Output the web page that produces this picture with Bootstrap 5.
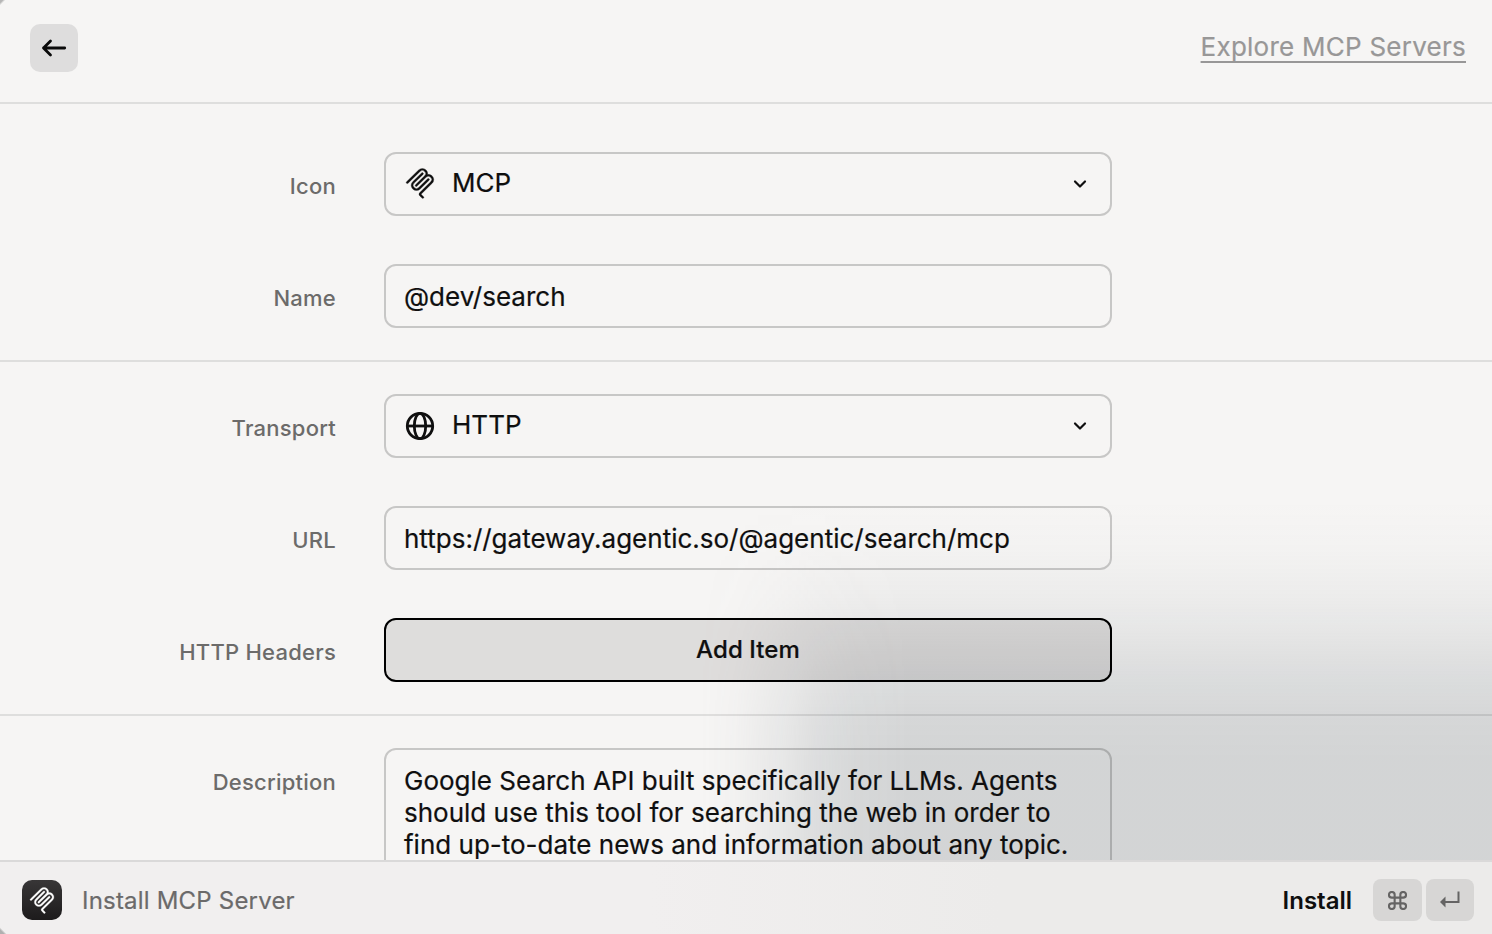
<!DOCTYPE html>
<html lang="en">
<head>
<meta charset="utf-8">
<meta name="viewport" content="width=device-width, initial-scale=1">
<title>Install MCP Server</title>
<link href="https://cdn.jsdelivr.net/npm/bootstrap@5.3.0/dist/css/bootstrap.min.css" rel="stylesheet">
<style>
  body { font-family: Inter, sans-serif; font-size: 26px; line-height: 32px; color: #0f0f0f; background: #f6f5f4; letter-spacing: 0; -webkit-text-stroke: .2px; }
  .window { height: 934px; }
  .topbar { height: 104px; padding: 24px 26px 0 30px; border-bottom: 2px solid #dededd; background: linear-gradient(135deg, #b5b5b5 2px, transparent 4px); }
  .back, .back:hover { width: 48px; height: 48px; border-radius: 10px; background: #dedddd; }
  .explore { color: #989797; text-underline-offset: 5px; text-decoration-thickness: 2px; letter-spacing: .25px; margin-top: 7px; }
  .explore:hover { color: #777; }
  /* dark window showing softly through the translucent panel */
  .backdrop-shade { inset: 0; pointer-events: none;
    background: linear-gradient(to bottom, rgba(105,115,122,0) 500px, rgba(105,115,122,.02) 550px, rgba(105,115,122,.065) 600px, rgba(105,115,122,.125) 640px, rgba(105,115,122,.19) 680px, rgba(105,115,122,.23) 720px, rgba(105,115,122,.248) 760px);
    -webkit-mask-image: linear-gradient(to right, transparent 700px, rgba(0,0,0,.1) 735px, rgba(0,0,0,.38) 778px, rgba(0,0,0,.7) 815px, rgba(0,0,0,.9) 855px, #000 910px);
    mask-image: linear-gradient(to right, transparent 700px, rgba(0,0,0,.1) 735px, rgba(0,0,0,.38) 778px, rgba(0,0,0,.7) 815px, rgba(0,0,0,.9) 855px, #000 910px); }
  .form-group-block { gap: 48px; padding: 32px 0; border-bottom: 2px solid rgba(0,0,0,.095); }
  .form-group-block.first { padding-top: 48px; }
  .form-line { gap: 48px; }
  .form-line label { width: 336px; font-size: 22px; font-weight: 500; color: #6c6b6a; letter-spacing: .23px; padding-top: 18px; -webkit-text-stroke: 0; }
  .field { width: 728px; height: 64px; border: 2px solid rgba(0,0,0,.19); border-radius: 12px; padding: 0 18px; background: transparent; }
  .field .value { margin-top: 1px; }
  .pick .value { margin: -2px 0 0 17px; letter-spacing: .05px; }
  .pick .lead-icon { margin: -1px 0 0 1px; }
  .pick .chev { margin-right: 4px; }
  .add { border-color: #000; background: rgba(8,0,4,.098); font-size: 24px; font-weight: 500; color: #0f0f0f; letter-spacing: .1px; }
  .descr { height: 140px; padding: 15px 18px; }
  .footbar { height: 74px; border-top: 2px solid #dad9d9; padding: 5px 18px 0 22px; font-size: 24px; color: #6b6a6a; letter-spacing: .2px;
    background: linear-gradient(45deg, #b0b0b0 3px, transparent 5px) padding-box, linear-gradient(to right, #f1efef 0, #f1efef 650px, #ecebea 1000px) padding-box; }
  .app-icon { width: 40px; height: 40px; border-radius: 10px; background: linear-gradient(#383637, #1d1b1c); color: #fff; margin-top: -1px; }
  .install { color: #0f0f0f; font-weight: 600; letter-spacing: 0; margin-right: 21px; -webkit-text-stroke: 0; }
  .keys { margin-top: -1px; }
  .keycap { height: 42px; width: 48px; border-radius: 8px; background: #d7d6d5; color: #656464; }
  .keycap.wide { width: 49px; }
</style>
</head>
<body>
<svg class="d-none" xmlns="http://www.w3.org/2000/svg">
  <symbol id="mcp" viewBox="0 0 24 24">
    <path d="M15.688 2.343a2.588 2.588 0 00-3.61 0l-9.626 9.44a.863.863 0 01-1.203 0 .823.823 0 010-1.18l9.626-9.44a4.313 4.313 0 016.016 0 4.116 4.116 0 011.204 3.54 4.3 4.3 0 013.609 1.18l.05.05a4.115 4.115 0 010 5.9l-8.706 8.537a.274.274 0 000 .393l1.788 1.754a.823.823 0 010 1.18.863.863 0 01-1.203 0l-1.788-1.753a1.92 1.92 0 010-2.754l8.706-8.538a2.47 2.47 0 000-3.54l-.05-.049a2.588 2.588 0 00-3.607-.003l-7.172 7.034-.002.002-.098.097a.863.863 0 01-1.204 0 .823.823 0 010-1.18l7.273-7.133a2.47 2.47 0 00-.003-3.537z"/>
    <path d="M14.485 4.703a.823.823 0 000-1.18.863.863 0 00-1.204 0l-7.119 6.982a4.115 4.115 0 000 5.9 4.314 4.314 0 006.016 0l7.12-6.982a.823.823 0 000-1.18.863.863 0 00-1.204 0l-7.119 6.982a2.588 2.588 0 01-3.61 0 2.47 2.47 0 010-3.54l7.12-6.982z"/>
  </symbol>
</svg>
<div class="window position-relative d-flex flex-column overflow-hidden">
  <div class="backdrop-shade position-absolute"></div>
  <header class="topbar d-flex justify-content-between align-items-start flex-shrink-0">
    <button class="back btn border-0 p-0 d-flex align-items-center justify-content-center" aria-label="Back">
      <svg width="28" height="24" viewBox="0 0 28 24" fill="none" stroke="#0a0a0a" stroke-width="2.8" stroke-linecap="round" stroke-linejoin="round"><path d="M24.700 12H3.500M10.500 5l-7 7 7 7"/></svg>
    </button>
    <a class="explore" href="#">Explore MCP Servers</a>
  </header>
  <main class="flex-fill overflow-hidden position-relative">
    <section class="form-group-block first d-flex flex-column">
      <div class="form-line d-flex"><label class="text-end">Icon</label>
        <div class="field pick d-flex align-items-center">
          <svg class="lead-icon" width="30" height="31" fill="currentColor" stroke="currentColor" stroke-width=".25"><use href="#mcp"/></svg>
          <span class="value">MCP</span>
          <svg class="chev ms-auto" width="16" height="12" fill="none" stroke="currentColor" stroke-width="2.200" stroke-linecap="round" stroke-linejoin="round"><path d="M3 3.500L8 8.500l5-5"/></svg>
        </div></div>
      <div class="form-line d-flex"><label class="text-end">Name</label>
        <div class="field d-flex align-items-center"><span class="value">@dev/search</span></div></div>
    </section>
    <section class="form-group-block d-flex flex-column">
      <div class="form-line d-flex"><label class="text-end">Transport</label>
        <div class="field pick d-flex align-items-center">
          <svg class="lead-icon mt-0" width="30" height="30" viewBox="0 0 30 30" fill="none" stroke="currentColor" stroke-width="2.800"><circle cx="15" cy="15" r="12.700"/><ellipse cx="15" cy="15" rx="5.700" ry="12.700"/><path d="M2.500 15h25"/></svg>
          <span class="value">HTTP</span>
          <svg class="chev ms-auto" width="16" height="12" fill="none" stroke="currentColor" stroke-width="2.200" stroke-linecap="round" stroke-linejoin="round"><path d="M3 3.500L8 8.500l5-5"/></svg>
        </div></div>
      <div class="form-line d-flex"><label class="text-end">URL</label>
        <div class="field d-flex align-items-center"><span class="value">https://gateway.agentic.so/@agentic/search/mcp</span></div></div>
      <div class="form-line d-flex"><label class="text-end">HTTP Headers</label>
        <button class="field add d-flex align-items-center justify-content-center">Add Item</button></div>
    </section>
    <section class="form-group-block d-flex flex-column">
      <div class="form-line d-flex"><label class="text-end">Description</label>
        <div class="field descr">Google Search API built specifically for LLMs. Agents<br>should use this tool for searching the web in order to<br>find up-to-date news and information about any topic.</div></div>
    </section>
  </main>
  <footer class="footbar position-relative d-flex align-items-center flex-shrink-0">
    <span class="app-icon d-flex align-items-center justify-content-center"><svg width="26" height="27" fill="currentColor" stroke="currentColor" stroke-width=".25"><use href="#mcp"/></svg></span>
    <span class="ms-3 ps-1">Install MCP Server</span>
    <span class="install ms-auto">Install</span>
    <span class="keys d-flex gap-1">
      <span class="keycap wide d-flex align-items-center justify-content-center"><svg width="19" height="19" viewBox="0 0 20 20" fill="none" stroke="currentColor" stroke-width="2.200"><path d="M7 7V4a3 3 0 1 0-3 3h12a3 3 0 1 0-3-3v12a3 3 0 1 0 3-3H4a3 3 0 1 0 3 3z"/></svg></span>
      <span class="keycap d-flex align-items-center justify-content-center"><svg width="22" height="20" viewBox="0 0 22 20" fill="none" stroke="currentColor" stroke-width="2"><path d="M19.500 1.500v10.500H5"/><path d="M1 12L6.500 6.500v11z" fill="currentColor" stroke="none"/></svg></span>
    </span>
  </footer>
</div>
<script src="https://cdn.jsdelivr.net/npm/bootstrap@5.3.0/dist/js/bootstrap.bundle.min.js"></script>
</body>
</html>
